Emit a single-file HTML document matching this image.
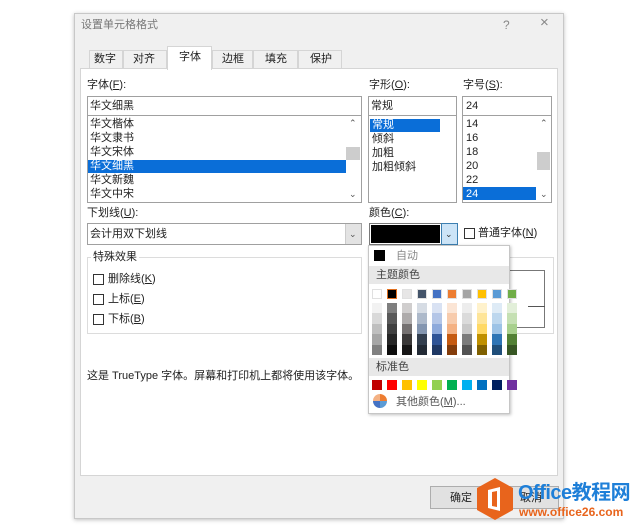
<!DOCTYPE html><html><head><meta charset="utf-8"><style>
*{margin:0;padding:0;box-sizing:border-box}
body{width:640px;height:529px;background:#fff;position:relative;overflow:hidden;font-family:"Liberation Sans","Noto Sans CJK SC",sans-serif;font-size:11px;color:#222}
.a{position:absolute}
.t{position:absolute;white-space:nowrap;line-height:14px}
.bx{position:absolute;border:1px solid #a0a0a0;background:#fff}
.sw{position:absolute;width:10px}
u{text-decoration:underline}
</style></head><body>
<div class="a" style="left:74px;top:13px;width:490px;height:506px;background:#f0f0f0;border:1px solid #c8c8c8;box-shadow:0 1px 4px rgba(0,0,0,.25)"></div>
<div class="t" style="left:81px;top:18px;color:#777;font-size:11px">设置单元格格式</div>
<div class="t" style="left:503px;top:18px;color:#888;font-size:12px">?</div>
<div class="t" style="left:540px;top:16px;color:#888;font-size:15px">×</div>
<div class="a" style="left:89px;top:50px;width:34px;height:19px;border:1px solid #d5d5d5;border-bottom:none;background:#f0f0f0"></div>
<div class="a" style="left:123px;top:50px;width:44px;height:19px;border:1px solid #d5d5d5;border-bottom:none;background:#f0f0f0"></div>
<div class="a" style="left:212px;top:50px;width:41px;height:19px;border:1px solid #d5d5d5;border-bottom:none;background:#f0f0f0"></div>
<div class="a" style="left:253px;top:50px;width:45px;height:19px;border:1px solid #d5d5d5;border-bottom:none;background:#f0f0f0"></div>
<div class="a" style="left:298px;top:50px;width:44px;height:19px;border:1px solid #d5d5d5;border-bottom:none;background:#f0f0f0"></div>
<div class="a" style="left:80px;top:68px;width:478px;height:408px;background:#fff;border:1px solid #d5d5d5"></div>
<div class="a" style="left:167px;top:46px;width:45px;height:24px;border:1px solid #d5d5d5;border-bottom:none;background:#fff"></div>
<div class="t" style="left:94px;top:52px">数字</div>
<div class="t" style="left:133px;top:52px">对齐</div>
<div class="t" style="left:179px;top:50px">字体</div>
<div class="t" style="left:222px;top:52px">边框</div>
<div class="t" style="left:265px;top:52px">填充</div>
<div class="t" style="left:310px;top:52px">保护</div>
<div class="t" style="left:87px;top:78px">字体(<u>F</u>):</div>
<div class="bx" style="left:87px;top:96px;width:275px;height:20px"></div>
<div class="t" style="left:90px;top:99px">华文细黑</div>
<div class="bx" style="left:87px;top:115px;width:275px;height:88px"></div>
<div class="a" style="left:88px;top:160px;width:258px;height:13px;background:#0a6ed8"></div>
<div class="a" style="left:346px;top:147px;width:14px;height:13px;background:#cdcdcd"></div>
<div class="t" style="left:90px;top:117px;line-height:14px">华文楷体<br>华文隶书<br>华文宋体<br><span style="color:#fff">华文细黑</span><br>华文新魏<br>华文中宋</div>
<div class="t" style="left:349px;top:116px;color:#555;font-size:9px">⌃</div>
<div class="t" style="left:349px;top:187px;color:#555;font-size:9px">⌄</div>
<div class="t" style="left:369px;top:78px">字形(<u>O</u>):</div>
<div class="bx" style="left:368px;top:96px;width:89px;height:20px"></div>
<div class="t" style="left:371px;top:99px">常规</div>
<div class="bx" style="left:368px;top:115px;width:89px;height:88px"></div>
<div class="a" style="left:370px;top:119px;width:70px;height:13px;background:#0a6ed8"></div>
<div class="t" style="left:372px;top:118px;line-height:14px"><span style="color:#fff">常规</span><br>倾斜<br>加粗<br>加粗倾斜</div>
<div class="t" style="left:463px;top:78px">字号(<u>S</u>):</div>
<div class="bx" style="left:462px;top:96px;width:90px;height:20px"></div>
<div class="t" style="left:466px;top:99px">24</div>
<div class="bx" style="left:462px;top:115px;width:90px;height:88px"></div>
<div class="a" style="left:463px;top:187px;width:73px;height:13px;background:#0a6ed8"></div>
<div class="a" style="left:537px;top:152px;width:13px;height:18px;background:#cdcdcd"></div>
<div class="t" style="left:466px;top:117px;line-height:14px">14<br>16<br>18<br>20<br>22<br><span style="color:#fff">24</span></div>
<div class="t" style="left:540px;top:116px;color:#555;font-size:9px">⌃</div>
<div class="t" style="left:540px;top:187px;color:#555;font-size:9px">⌄</div>
<div class="t" style="left:87px;top:206px">下划线(<u>U</u>):</div>
<div class="bx" style="left:87px;top:223px;width:275px;height:22px"></div>
<div class="a" style="left:345px;top:224px;width:16px;height:20px;background:#e3e3e3;border-left:1px solid #ccc"></div>
<div class="t" style="left:349px;top:227px;color:#555;font-size:9px">⌄</div>
<div class="t" style="left:90px;top:227px">会计用双下划线</div>
<div class="a" style="left:87px;top:257px;width:275px;height:77px;border:1px solid #dcdcdc"></div>
<div class="t" style="left:91px;top:250px;background:#fff;padding:0 2px">特殊效果</div>
<div class="a" style="left:93px;top:274px;width:11px;height:11px;border:1px solid #333"></div>
<div class="t" style="left:108px;top:272px">删除线(<u>K</u>)</div>
<div class="a" style="left:93px;top:294px;width:11px;height:11px;border:1px solid #333"></div>
<div class="t" style="left:108px;top:292px">上标(<u>E</u>)</div>
<div class="a" style="left:93px;top:314px;width:11px;height:11px;border:1px solid #333"></div>
<div class="t" style="left:108px;top:312px">下标(<u>B</u>)</div>
<div class="t" style="left:369px;top:206px">颜色(<u>C</u>):</div>
<div class="bx" style="left:369px;top:223px;width:89px;height:22px;border-color:#7a7a7a"></div>
<div class="a" style="left:371px;top:225px;width:69px;height:18px;background:#000"></div>
<div class="a" style="left:441px;top:223px;width:17px;height:22px;background:#cce4f7;border:1px solid #3c7fb1"></div>
<div class="t" style="left:445px;top:227px;color:#333;font-size:9px">⌄</div>
<div class="a" style="left:464px;top:228px;width:11px;height:11px;border:1px solid #333"></div>
<div class="t" style="left:478px;top:226px">普通字体(<u>N</u>)</div>
<div class="a" style="left:368px;top:257px;width:186px;height:77px;border:1px solid #dcdcdc"></div>
<div class="a" style="left:510px;top:270px;width:35px;height:58px;border:1px solid #777;border-left:none"></div>
<div class="a" style="left:528px;top:306px;width:17px;height:1px;background:#555"></div>
<div class="t" style="left:87px;top:369px">这是 TrueType 字体。屏幕和打印机上都将使用该字体。</div>
<div class="a" style="left:368px;top:245px;width:142px;height:169px;background:#fff;border:1px solid #c6c6c6;box-shadow:1px 1px 3px rgba(0,0,0,.25)"></div>
<div class="a" style="left:374px;top:250px;width:11px;height:11px;background:#000"></div>
<div class="t" style="left:396px;top:249px;color:#888">自动</div>
<div class="a" style="left:369px;top:266px;width:140px;height:18px;background:#e8e8e8"></div>
<div class="t" style="left:376px;top:268px;color:#444">主题颜色</div>
<div class="a" style="left:369px;top:358px;width:140px;height:18px;background:#e8e8e8"></div>
<div class="t" style="left:376px;top:360px;color:#444">标准色</div>
<div id="sw"></div>
<svg class="a" style="left:373px;top:394px" width="14" height="14" viewBox="0 0 14 14"><path d="M7 7L7 0A7 7 0 0 1 14 7Z" fill="#ed7d31"/><path d="M7 7L14 7A7 7 0 0 1 7 14Z" fill="#5b9bd5"/><path d="M7 7L7 14A7 7 0 0 1 0 7Z" fill="#4472c4"/><path d="M7 7L0 7A7 7 0 0 1 7 0Z" fill="#f4b183"/></svg>
<div class="t" style="left:396px;top:395px;color:#555">其他颜色(<u>M</u>)...</div>
<div class="a" style="left:430px;top:486px;width:63px;height:23px;background:#e1e1e1;border:1px solid #adadad"></div>
<div class="t" style="left:450px;top:491px">确定</div>
<div class="a" style="left:499px;top:486px;width:60px;height:23px;background:#e1e1e1;border:1px solid #adadad"></div>
<div class="t" style="left:520px;top:491px">取消</div>
<svg class="a" style="left:476px;top:478px" width="38" height="42" viewBox="0 0 38 42"><path d="M19 0L37 10V32L19 42L1 32V10Z" fill="#e8641c"/><path d="M12 12L24 9V33L12 30Z" fill="#fff"/><path d="M16 14L21 13V29L16 28Z" fill="#e8641c"/></svg>
<div class="t" style="left:518px;top:481px;color:#1e7fd8;font-size:20px;font-weight:bold;line-height:24px;letter-spacing:-0.5px">Office教程网</div>
<div class="t" style="left:519px;top:506px;color:#e8641c;font-size:12px;font-weight:bold;line-height:13px">www.office26.com</div>
<script>
var th=['#ffffff','#000000','#e7e6e6','#44546a','#4472c4','#ed7d31','#a5a5a5','#ffc000','#5b9bd5','#70ad47'];
var sh=[['#f2f2f2','#d9d9d9','#bfbfbf','#a6a6a6','#808080'],['#7f7f7f','#595959','#404040','#262626','#0d0d0d'],['#d0cece','#aeabab','#757171','#3a3838','#171616'],['#d6dce4','#adb9ca','#8496b0','#333f4f','#222a35'],['#d9e2f3','#b4c6e7','#8eaadb','#2f5496','#1f3864'],['#fbe5d5','#f7cbac','#f4b183','#c55a11','#833c0b'],['#ededed','#dbdbdb','#c9c9c9','#7b7b7b','#525252'],['#fff2cc','#fee599','#ffd965','#bf9000','#7f6000'],['#deebf6','#bdd7ee','#9dc3e6','#2e75b5','#1f4e79'],['#e2efd9','#c5e0b3','#a8d08d','#538135','#375623']];
var st=['#c00000','#ff0000','#ffc000','#ffff00','#92d050','#00b050','#00b0f0','#0070c0','#002060','#7030a0'];
var h='';
for(var i=0;i<10;i++){var x=372+15*i;
h+='<div class="sw" style="left:'+x+'px;top:289px;height:10px;background:'+th[i]+';border:1px solid '+(i==1?'#e07020':'#e0e0e0')+'"></div>';
for(var j=0;j<5;j++)h+='<div class="sw" style="left:'+x+'px;top:'+(303+j*10.4)+'px;height:10.5px;background:'+sh[i][j]+'"></div>';
h+='<div class="sw" style="left:'+x+'px;top:380px;height:10px;background:'+st[i]+'"></div>';}
document.getElementById('sw').outerHTML=h;
</script>
</body></html>
